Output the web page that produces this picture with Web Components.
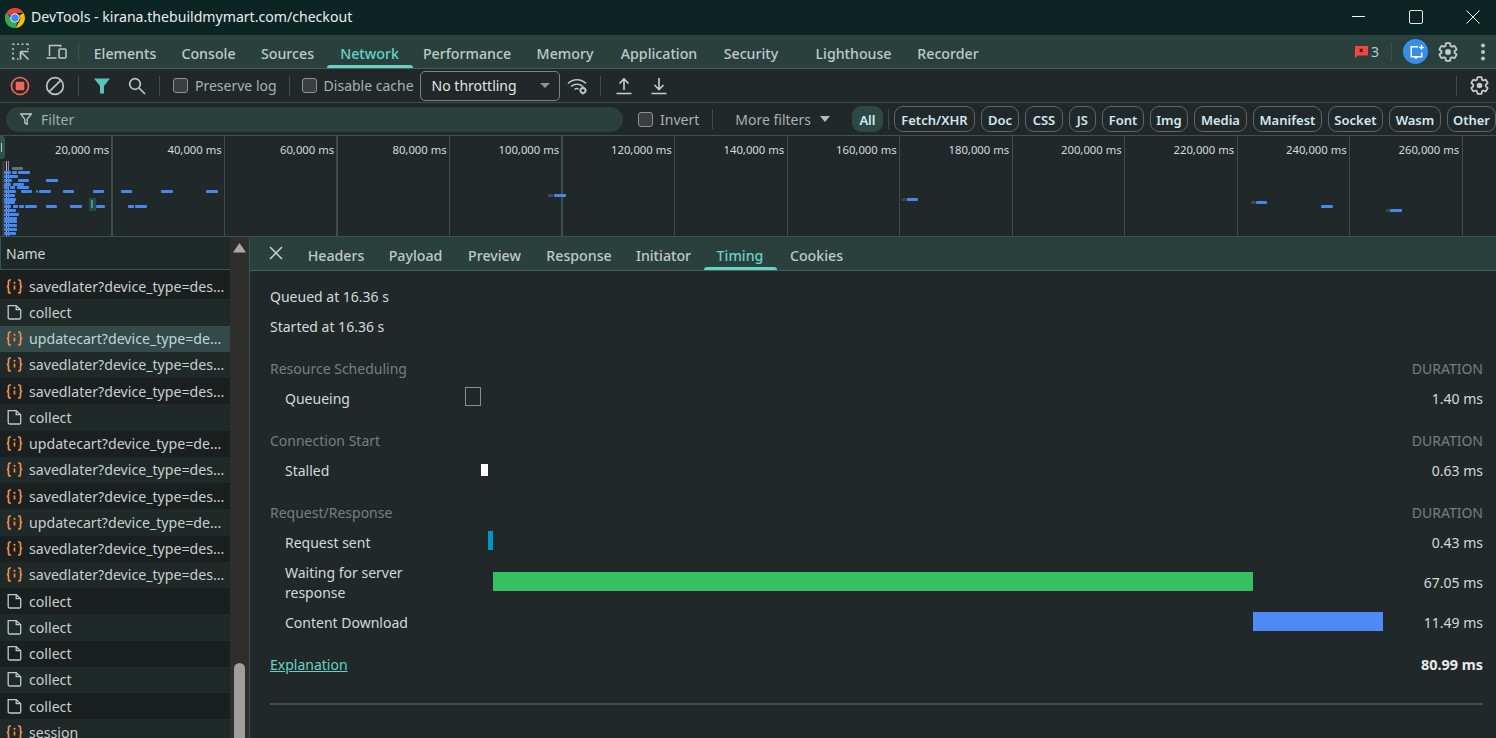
<!DOCTYPE html>
<html>
<head>
<meta charset="utf-8">
<title>DevTools</title>
<style>
  html, body { margin: 0; padding: 0; background: #212829; overflow: hidden; }
  body { font-family: "Noto Sans", "Open Sans", sans-serif; font-size: 14px; color: #c4cfcd; }
</style>
</head>
<body>
<dt-app>
  <dt-titlebar>DevTools - kirana.thebuildmymart.com/checkout</dt-titlebar>
  <dt-mainbar></dt-mainbar>
  <dt-toolbar></dt-toolbar>
  <dt-filterbar></dt-filterbar>
  <dt-overview></dt-overview>
  <dt-split>
    <dt-list slot="list"></dt-list>
    <dt-timing slot="detail"></dt-timing>
  </dt-split>
</dt-app>

<script>
// icons
const GEAR = 'M19.14 12.94c.04-.3.06-.61.06-.94 0-.32-.02-.64-.07-.94l2.03-1.58c.18-.14.23-.41.12-.61l-1.92-3.32c-.12-.22-.37-.29-.59-.22l-2.39.96c-.5-.38-1.03-.7-1.62-.94l-.36-2.54c-.04-.24-.24-.41-.48-.41h-3.84c-.24 0-.43.17-.47.41l-.36 2.54c-.59.24-1.13.57-1.62.94l-2.39-.96c-.22-.08-.47 0-.59.22L2.74 8.87c-.12.21-.08.47.12.61l2.03 1.58c-.05.3-.09.63-.09.94s.02.64.07.94l-2.03 1.58c-.18.14-.23.41-.12.61l1.92 3.32c.12.22.37.29.59.22l2.39-.96c.5.38 1.03.7 1.62.94l.36 2.54c.05.24.24.41.48.41h3.84c.24 0 .44-.17.47-.41l.36-2.54c.59-.24 1.13-.56 1.62-.94l2.39.96c.22.08.47 0 .59-.22l1.92-3.32c.12-.22.07-.47-.12-.61l-2.01-1.58z';
const gearIcon = (size) => `<svg width="${size}" height="${size}" viewBox="0 0 24 24"><path d="${GEAR}" fill="none" stroke="#c3cbc9" stroke-width="2"/><circle cx="12" cy="12" r="3.2" fill="#c3cbc9"/></svg>`;

class DtApp extends HTMLElement {
  constructor() {
    super();
    this.attachShadow({mode: 'open'}).innerHTML = `
      <style>
        :host { display: flex; flex-direction: column; width: 1496px; height: 738px; overflow: hidden; }
      </style>
      <slot></slot>`;
  }
}

class DtTitlebar extends HTMLElement {
  constructor() {
    super();
    this.attachShadow({mode: 'open'}).innerHTML = `
      <style>
        :host { display: flex; align-items: center; flex: 0 0 35px; background: #0c2523; color: #e8eeee; font-size: 14.1px; padding: 0 16px 0 5px; }
        .logo { width: 20px; height: 20px; margin-right: 6px; }
        .title { flex: 1; position: relative; top: -1px; }
        .ctls { display: flex; gap: 43px; }
        .ctls svg { display: block; margin-bottom: 1px; }
      </style>
      <svg class="logo" viewBox="4 4 40 40">
        <path d="M24 4a20 20 0 0 1 17.300 10H24a10 10 0 0 0-9.600 7.200L7.700 12A20 20 0 0 1 24 4z" fill="#ea4335"/>
        <path d="M41.300 14A20 20 0 0 1 25 44l8.400-14.500A10 10 0 0 0 32.600 19z" fill="#fbbc04"/>
        <path d="M25 44A20 20 0 0 1 7.700 12L16 26.500A10 10 0 0 0 28 33.200z" fill="#34a853"/>
        <circle cx="24" cy="24" r="9.500" fill="#fff"/>
        <circle cx="24" cy="24" r="7.500" fill="#4285f4"/>
      </svg>
      <span class="title"><slot></slot></span>
      <div class="ctls">
        <svg width="14" height="14" viewBox="0 0 14 14"><path d="M0 6.500h13" stroke="#fff" stroke-width="1"/></svg>
        <svg width="14" height="14" viewBox="0 0 14 14"><rect x=".5" y=".5" width="13" height="13" rx="1.500" fill="none" stroke="#e6e6e6"/></svg>
        <svg width="14" height="14" viewBox="0 0 14 14"><path d="M.5.5l13 13M13.500.5l-13 13" stroke="#fff" stroke-width="1"/></svg>
      </div>`;
  }
}

// one tab of the main or detail tab strips
class DtTab extends HTMLElement {
  constructor() {
    super();
    this.attachShadow({mode: 'open'}).innerHTML = `
      <style>
        :host { display: flex; align-items: center; justify-content: center; height: 100%; padding-top: 4px; box-sizing: border-box; position: relative; font-size: 14.2px; font-weight: 500; color: #bfcac8; white-space: nowrap; flex: none; }
        :host([active]) { color: #67d3c5; }
        :host([active])::after { content: ""; position: absolute; left: 0; right: 0; bottom: 0; height: 3px; border-radius: 3px 3px 0 0; background: #67d3c5; }
      </style>
      <slot></slot>`;
  }
}

class DtSep extends HTMLElement {
  constructor() {
    super();
    this.attachShadow({mode: 'open'}).innerHTML = `
      <style>
        :host { display: block; width: 1px; height: 20px; background: #3c4f4c; flex: none; }
      </style>`;
  }
}

class DtMainbar extends HTMLElement {
  constructor() {
    super();
    this.attachShadow({mode: 'open'}).innerHTML = `
      <style>
        :host { display: flex; align-items: center; flex: none; background: #2a403d; border-bottom: 1px solid #43605b; height: 33px; }
        .tools { display: flex; align-items: center; width: 78px; flex: none; padding-left: 11px; box-sizing: border-box; gap: 15px; }
        .tabs { display: flex; align-items: center; height: 100%; margin-left: 2.5px; }
        .right { margin-left: auto; display: flex; align-items: center; }
        .count { font-size: 14px; margin-left: 3px; color: #bfcac8; }
        .ai { width: 25px; height: 25px; border-radius: 50%; background: #3a8de6; display: flex; align-items: center; justify-content: center; margin: 0 9px 0 11px; }
        .gear { display: flex; margin-right: 21px; }
        .more { display: flex; margin-right: 10px; }
      </style>
      <div class="tools">
        <svg width="20" height="20" viewBox="0 0 20 20" fill="none" stroke="#bcc7c5" stroke-width="1.500"><path d="M2 3v-.8h1.500M6 2.200h2M10.500 2.200h2M15 2.200h2v1M17 6v1.500M2 6v2M2 10.500v2M2 15v2h1.500M6 17h1.500"/><path d="M9.500 9.500h8M9.500 9.500v8M9.500 9.500l8 8" stroke-width="1.700"/></svg>
        <svg width="21" height="20" viewBox="0 0 21 20" fill="none" stroke="#bcc7c5" stroke-width="1.500"><path d="M3.500 14V3.500h11V5"/><path d="M.5 16h10"/><rect x="13" y="7" width="7" height="9" rx="1"/></svg>
      </div>
      <dt-sep></dt-sep>
      <div class="tabs">
        <dt-tab style="width:87px">Elements</dt-tab>
        <dt-tab style="width:80px">Console</dt-tab>
        <dt-tab style="width:78px">Sources</dt-tab>
        <dt-tab style="width:86px" active>Network</dt-tab>
        <dt-tab style="width:109px">Performance</dt-tab>
        <dt-tab style="width:87px">Memory</dt-tab>
        <dt-tab style="width:101px">Application</dt-tab>
        <dt-tab style="width:83px">Security</dt-tab>
        <dt-tab style="width:101px;margin-left:10.500px">Lighthouse</dt-tab>
        <dt-tab style="width:88px">Recorder</dt-tab>
      </div>
      <div class="right">
        <svg width="13" height="13" viewBox="0 0 13 13"><path d="M0 1h13v9.500H3L0 13z" fill="#f2463f"/><path d="M4.700 3.800l3 3M7.700 3.800l-3 3" stroke="#30110f" stroke-width="1.200"/></svg>
        <span class="count">3</span>
        <dt-sep style="margin-left:12px"></dt-sep>
        <span class="ai"><svg width="18" height="18" viewBox="0 0 18 18"><path d="M3.500 3H11v1.500H5v8.500h9V9.500h1.500V14a.5.5 0 0 1-.5.500h-4.500L9 16.500l-1.500-2H4a.5.5 0 0 1-.5-.5z" fill="#fff"/><path d="M14.500 1.500l.9 2.100 2.100.9-2.100.9-.9 2.100-.9-2.100-2.100-.9 2.100-.9z" fill="#fff"/></svg></span>
        <span class="gear">${gearIcon(22)}</span>
        <span class="more"><svg width="6" height="18" viewBox="0 0 6 18" fill="#bcc7c5"><circle cx="3" cy="2.500" r="2"/><circle cx="3" cy="9" r="2"/><circle cx="3" cy="15.500" r="2"/></svg></span>
      </div>`;
  }
}

class DtCheck extends HTMLElement {
  constructor() {
    super();
    this.attachShadow({mode: 'open'}).innerHTML = `
      <style>
        :host { display: inline-flex; align-items: center; gap: 7px; color: #a9b2b1; font-size: 14px; white-space: nowrap; flex: none; }
        .box { width: 13px; height: 13px; border: 1px solid #8b9391; border-radius: 3px; background: #3c3f3f; }
      </style>
      <span class="box"></span><slot></slot>`;
  }
}

class DtToolbar extends HTMLElement {
  constructor() {
    super();
    this.attachShadow({mode: 'open'}).innerHTML = `
      <style>
        :host { display: flex; align-items: center; flex: none; height: 33px; background: #212829; border-bottom: 1px solid #3c4f4c; }
        .rec { margin-left: 10px; display: flex; }
        .clear { margin-left: 15px; display: flex; }
        .funnel { margin-left: 15px; display: flex; }
        .search { margin-left: 18px; display: flex; }
        .select { width: 140px; height: 30px; box-sizing: border-box; margin-left: 6px; padding: 0 11px; border: 1px solid #7a8583; border-radius: 5px; display: flex; align-items: center; justify-content: space-between; color: #e0e6e5; font-size: 14px; }
        .select i { width: 0; height: 0; border: 5px solid transparent; border-top: 5px solid #8e9795; border-bottom: 0; margin-right: -2px; }
        .wifi { margin-left: 7px; display: flex; }
        .up { margin-left: 15px; display: flex; }
        .down { margin-left: 19px; display: flex; }
        .end { margin-left: auto; display: flex; align-items: center; }
      </style>
      <span class="rec"><svg width="20" height="20" viewBox="0 0 20 20"><circle cx="10" cy="10" r="8.500" fill="none" stroke="#f2665c" stroke-width="1.700"/><rect x="5.700" y="5.700" width="8.600" height="8.600" rx="1" fill="#f2665c"/></svg></span>
      <span class="clear"><svg width="20" height="20" viewBox="0 0 20 20" fill="none" stroke="#bcc7c5" stroke-width="1.700"><circle cx="10" cy="10" r="8.300"/><path d="M4.300 15.700L15.700 4.300"/></svg></span>
      <dt-sep style="margin-left:13px"></dt-sep>
      <span class="funnel"><svg width="16" height="16" viewBox="0 0 16 16"><path d="M0 .5h16L10 8v7.500H6V8z" fill="#58c4b6"/></svg></span>
      <span class="search"><svg width="18" height="18" viewBox="0 0 18 18" fill="none" stroke="#bcc7c5" stroke-width="1.700"><circle cx="7" cy="7" r="5.300"/><path d="M11 11l6 6"/></svg></span>
      <dt-sep style="margin-left:13px"></dt-sep>
      <dt-check style="margin-left:13px">Preserve log</dt-check>
      <dt-sep style="margin-left:12px"></dt-sep>
      <dt-check style="margin-left:12px">Disable cache</dt-check>
      <div class="select"><span>No throttling</span><i></i></div>
      <span class="wifi"><svg width="21" height="18" viewBox="0 0 21 18" fill="none" stroke="#bcc7c5" stroke-width="1.500"><path d="M1 6.500c5-5 13-5 18 0M4 9.500c3.500-3 8.500-3 12 0M7.500 12.300c1.500-1 3-1 4 0"/><circle cx="16" cy="13.500" r="2.500" stroke-width="1.800"/><path d="M16 9.500v1.500M16 16v1.500M12.500 13.500H14M18 13.500h1.500" stroke-width="1.300"/></svg></span>
      <dt-sep style="margin-left:12px"></dt-sep>
      <span class="up"><svg width="16" height="18" viewBox="0 0 16 18" fill="none" stroke="#c6d0ce" stroke-width="1.600"><path d="M8 13V2M3.500 6.500L8 2l4.500 4.500M.5 16.500h15"/></svg></span>
      <span class="down"><svg width="16" height="18" viewBox="0 0 16 18" fill="none" stroke="#c6d0ce" stroke-width="1.600"><path d="M8 1v11M3.500 8L8 12.500 12.500 8M.5 16.500h15"/></svg></span>
      <div class="end">
        <dt-sep style="margin-right:12px"></dt-sep>
        <span style="display:flex;margin-right:6px">${gearIcon(21)}</span>
      </div>`;
  }
}

class DtChip extends HTMLElement {
  constructor() {
    super();
    this.attachShadow({mode: 'open'}).innerHTML = `
      <style>
        :host { display: flex; align-items: center; justify-content: center; box-sizing: border-box; height: 26px; padding-top: 1px; border: 1px solid #5e6665; border-radius: 9px; font-size: 13px; font-weight: 600; color: #d5e6ee; white-space: nowrap; flex: none; }
        :host([selected]) { background: #2d4845; border-color: #2d4845; color: #cfeef2; }
      </style>
      <slot></slot>`;
  }
}

class DtFilterbar extends HTMLElement {
  constructor() {
    super();
    this.attachShadow({mode: 'open'}).innerHTML = `
      <style>
        :host { display: flex; align-items: center; flex: none; height: 32px; background: #212829; overflow: hidden; }
        .input { width: 617px; height: 25px; margin-left: 6px; border-radius: 13px; background: #2a403d; display: flex; align-items: center; flex: none; color: #a3adab; font-size: 14px; }
        .input svg { margin: 0 9px 0 14px; }
        .more { display: flex; align-items: center; color: #a9b2b1; font-size: 14px; margin-left: 22px; white-space: nowrap; flex: none; }
        .more i { width: 0; height: 0; border: 5px solid transparent; border-top: 6px solid #b4bdbb; border-bottom: 0; margin-left: 9px; }
        .chips { display: flex; gap: 6px; margin-left: 5px; }
      </style>
      <div class="input"><svg width="12" height="12" viewBox="0 0 12 12" fill="none" stroke="#bcc7c5" stroke-width="1.300"><path d="M.7 1h10.600L7.200 6.200v5L4.800 10V6.200z"/></svg>Filter</div>
      <dt-check style="margin-left:15px">Invert</dt-check>
      <dt-sep style="margin-left:13px"></dt-sep>
      <div class="more">More filters<i></i></div>
      <dt-chip selected style="width:31px;margin-left:22px">All</dt-chip>
      <dt-sep style="margin-left:5px"></dt-sep>
      <div class="chips">
        <dt-chip style="width:81px">Fetch/XHR</dt-chip>
        <dt-chip style="width:38px">Doc</dt-chip>
        <dt-chip style="width:38px">CSS</dt-chip>
        <dt-chip style="width:27px">JS</dt-chip>
        <dt-chip style="width:42px">Font</dt-chip>
        <dt-chip style="width:38px">Img</dt-chip>
        <dt-chip style="width:53px">Media</dt-chip>
        <dt-chip style="width:69px">Manifest</dt-chip>
        <dt-chip style="width:55px">Socket</dt-chip>
        <dt-chip style="width:52px">Wasm</dt-chip>
        <dt-chip style="width:49px">Other</dt-chip>
      </div>`;
  }
}

// network overview: time grid and waterfall bars, [x, y, width, colour]
const OV_BARS = [
  [12, 168, 11, '#6a6f6f'],
  [4, 172, 7], [12, 172, 5], [18, 172, 12],
  [4, 176, 14],
  [4, 180, 8], [18, 180, 11], [46, 180, 12],
  [4, 184, 7], [13, 184, 11],
  [4, 187, 4], [10, 187, 5], [17, 187, 12],
  [4, 191, 12], [21, 191, 11], [39, 191, 12], [63, 191, 11], [93, 191, 11], [121, 191, 11], [161, 191, 12], [206, 191, 12],
  [36, 191, 2, '#2f9e58'],
  [4, 195, 11], [4, 199, 12], [4, 202, 11],
  [4, 206, 7], [13, 206, 5], [19, 206, 5], [25, 206, 12], [46, 206, 11], [70, 206, 12], [96, 206, 9], [128, 206, 6], [135, 206, 12],
  [4, 210, 12], [4, 214, 15], [4, 218, 13], [4, 221, 13], [4, 225, 13], [4, 229, 13], [4, 233, 12],
  [548, 195, 5, '#4a4468'], [554, 195, 12],
  [902, 199, 5, '#36465a'], [907, 199, 11],
  [1251, 202, 5, '#344a52'], [1256, 202, 11],
  [1321, 206, 12],
  [1386, 210, 4, '#344a52'], [1390, 210, 12]
];

class DtOverview extends HTMLElement {
  constructor() {
    super();
    const labels = [];
    for (let i = 1; i <= 13; i++) {
      labels.push(`<div class="cell${i == 1 || i == 3 || i == 5 ? ' thick' : ''}">${i * 20},000 ms</div>`);
    }
    const bars = OV_BARS.map(b => `<i style="left:${b[0]}px;top:${b[1] - 137}px;width:${b[2]}px;background:${b[3] || '#4788ee'}"></i>`).join('');
    this.attachShadow({mode: 'open'}).innerHTML = `
      <style>
        :host { display: block; flex: none; height: 102px; position: relative; background: #212829; border-top: 1px solid #3c524e; border-bottom: 1px solid #3c524e; box-sizing: border-box; overflow: hidden; }
        .grid { display: flex; height: 100%; margin-left: .2px; }
        .cell { flex: 0 0 112.5px; box-sizing: border-box; border-right: 1px solid #3c4f4c; text-align: right; font-size: 11.3px; color: #d3dcda; padding: 6px 2.5px 0 0; white-space: nowrap; }
        .thick { border-right-width: 2px; padding-right: 1.5px; }
        .bars i { position: absolute; height: 3px; border-radius: 1px; }
        .handle { position: absolute; left: 0; top: 0; width: 5px; height: 23px; background: #33504c; border-radius: 0 3px 3px 0; }
        .handle::after { content: ""; position: absolute; left: 1px; top: 7px; width: 1px; height: 9px; background: #9fd0c8; }
        .mark { position: absolute; top: 25px; bottom: 0; width: 1px; }
        .hit { position: absolute; left: 89px; top: 62px; width: 7px; height: 13px; background: #264a48; }
        .hit::after { content: ""; position: absolute; left: 2px; top: 2px; width: 2px; height: 8px; background: #3c95a5; }
      </style>
      <div class="grid">${labels.join('')}</div>
      <div class="mark" style="left:2px;width:3px;background:#353b3b"></div>
      <div class="mark" style="left:6px;background:#e8a89a"></div>
      <div class="mark" style="left:8px;background:#6b8fd6"></div>
      <div class="handle"></div>
      <div class="hit"></div>
      <div class="bars">${bars}</div>`;
  }
}

class DtSplit extends HTMLElement {
  constructor() {
    super();
    this.attachShadow({mode: 'open'}).innerHTML = `
      <style>
        :host { display: flex; flex: 1; min-height: 0; }
        .l { flex: 0 0 249px; display: flex; overflow: hidden; border-right: 1px solid #3c524e; }
        .r { flex: 1; min-width: 0; display: flex; }
      </style>
      <div class="l"><slot name="list"></slot></div>
      <div class="r"><slot name="detail"></slot></div>`;
  }
}

class DtRow extends HTMLElement {
  constructor() {
    super();
    const json = this.getAttribute('kind') == 'json';
    const icon = json
      ? `<svg width="17" height="15" viewBox="0 0 17 15" fill="none" stroke="#f28a4d" stroke-width="1.700"><path d="M5 1H4C2.800 1 2.500 1.800 2.500 3v2.500C2.500 6.500 2 7.500.8 7.500c1.200 0 1.700 1 1.700 2V12c0 1.200.3 2 1.500 2h1M12 1h1c1.200 0 1.500.8 1.500 2v2.500c0 1 .5 2 1.700 2-1.200 0-1.700 1-1.700 2V12c0 1.200-.3 2-1.500 2h-1"/><path d="M8.500 6.500v4"/><circle cx="8.500" cy="3.800" r="1.100" fill="#f28a4d" stroke="none"/></svg>`
      : `<svg width="17" height="15" viewBox="0 0 17 15" fill="none" stroke="#c3c8c7" stroke-width="1.300"><path d="M2.200.7h8l4.500 4v8a1.300 1.300 0 0 1-1.300 1.300H3.500a1.300 1.300 0 0 1-1.300-1.300z"/><path d="M10.200.7v4h4.500"/></svg>`;
    this.attachShadow({mode: 'open'}).innerHTML = `
      <style>
        :host { display: flex; align-items: center; flex: none; height: 26.25px; padding-left: 6px; gap: 6px; font-size: 14.15px; color: #c8cfce; background: #1a2020; white-space: nowrap; overflow: hidden; }
        :host([even]) { background: #1f2928; }
        :host([selected]) { background: #334a48; color: #bcd8d4; }
        svg { flex: none; }
      </style>
      ${icon}<span><slot></slot></span>`;
  }
}

class DtList extends HTMLElement {
  constructor() {
    super();
    const saved = 'savedlater?device_type=des...';
    const cart = 'updatecart?device_type=de...';
    const rows = [
      ['json', saved], ['doc', 'collect'], ['json', cart, 1],
      ['json', saved], ['json', saved], ['doc', 'collect'],
      ['json', cart], ['json', saved], ['json', saved],
      ['json', cart], ['json', saved], ['json', saved],
      ['doc', 'collect'], ['doc', 'collect'], ['doc', 'collect'], ['doc', 'collect'], ['doc', 'collect'], ['json', 'session']
    ];
    const html = rows.map((r, i) => `<dt-row kind="${r[0]}"${i % 2 ? ' even' : ''}${r[2] ? ' selected' : ''}>${r[1]}</dt-row>`).join('');
    this.attachShadow({mode: 'open'}).innerHTML = `
      <style>
        :host { display: flex; width: 249px; height: 100%; }
        .col { width: 230px; flex: none; display: flex; flex-direction: column; background: #1a2020; overflow: hidden; }
        .head { flex: none; height: 33px; box-sizing: border-box; display: flex; align-items: center; padding-left: 5px; border: 1px solid #3c524e; border-top: 0; border-right: 0; background: #1f2928; color: #cdd5d3; font-size: 14px; margin-bottom: 3px; }
        .bar { width: 19px; flex: none; background: #2e2e2e; position: relative; }
        .bar svg { position: absolute; left: 3px; top: 5px; }
        .thumb { position: absolute; left: 4px; width: 11px; top: 426px; height: 100px; border-radius: 6px 6px 0 0; background: #9e9e9e; }
      </style>
      <div class="col"><div class="head">Name</div>${html}</div>
      <div class="bar">
        <svg width="13" height="11" viewBox="0 0 13 11"><path d="M6.500 1L13 10.500H0z" fill="#a8a8a8"/></svg>
        <div class="thumb"></div>
      </div>`;
  }
}

// a row of the timing table: label, bar track, duration
class DtTimingRow extends HTMLElement {
  constructor() {
    super();
    const start = this.getAttribute('start');
    const w = this.getAttribute('w');
    const color = this.getAttribute('color');
    const h = this.getAttribute('h') || 19;
    const shift = this.getAttribute('shift') || 0;
    const outline = this.hasAttribute('outline');
    this.attachShadow({mode: 'open'}).innerHTML = `
      <style>
        :host { display: grid; grid-template-columns: 180px 918px 1fr; align-items: center; box-sizing: border-box; min-height: 30px; padding: 2px 0 0 15px; color: #d4dad9; font-size: 14px; line-height: 20px; }
        :host([tall]) { min-height: 50px; }
        .track { height: 19px; position: relative; top: -3px; display: flex; align-items: center; }
        .seg { margin-left: ${start}px; width: ${w}px; height: ${h}px; box-sizing: border-box; position: relative; top: ${shift}px; background: ${outline ? 'transparent' : color}; ${outline ? 'border: 1px solid #8a8f8e;' : ''} }
        .val { text-align: right; }
      </style>
      <div><slot></slot></div>
      <div class="track"><div class="seg"></div></div>
      <div class="val">${this.getAttribute('value')}</div>`;
  }
}

class DtSection extends HTMLElement {
  constructor() {
    super();
    this.attachShadow({mode: 'open'}).innerHTML = `
      <style>
        :host { display: flex; justify-content: space-between; align-items: center; height: 30px; color: #787f7e; font-size: 14px; }
      </style>
      <slot></slot><span>DURATION</span>`;
  }
}

class DtTiming extends HTMLElement {
  constructor() {
    super();
    this.attachShadow({mode: 'open'}).innerHTML = `
      <style>
        :host { display: flex; flex-direction: column; flex: 1; min-width: 0; background: #212829; }
        .tabs { flex: none; height: 34px; box-sizing: border-box; display: flex; align-items: center; background: #2a403d; border-bottom: 1px solid #43605b; }
        .close { display: flex; margin: -1px 12.500px 0 19px; }
        .body { padding: 10px 13px 0 20px; color: #d4dad9; font-size: 14px; }
        .q { height: 30px; display: flex; align-items: center; }
        dt-section { margin-top: 12px; }
        .sum { display: flex; justify-content: space-between; align-items: center; height: 30px; margin-top: 12px; }
        .sum a { color: #67d3c5; text-decoration: underline; }
        .sum b { font-weight: 700; color: #e6ebea; font-size: 14.400px; }
        .rule { height: 2px; background: #3c524e; margin-top: 24px; }
      </style>
      <div class="tabs">
        <span class="close"><svg width="14" height="14" viewBox="0 0 14 14"><path d="M1 1l12 12M13 1L1 13" stroke="#c6d0ce" stroke-width="1.500"/></svg></span>
        <dt-tab style="width:81px">Headers</dt-tab>
        <dt-tab style="width:78px">Payload</dt-tab>
        <dt-tab style="width:80px">Preview</dt-tab>
        <dt-tab style="width:89px">Response</dt-tab>
        <dt-tab style="width:80px">Initiator</dt-tab>
        <dt-tab style="width:73px" active>Timing</dt-tab>
        <dt-tab style="width:80px">Cookies</dt-tab>
      </div>
      <div class="body">
        <div class="q">Queued at 16.36 s</div>
        <div class="q">Started at 16.36 s</div>
        <dt-section>Resource Scheduling</dt-section>
        <dt-timing-row start="0" w="16" outline value="1.40 ms">Queueing</dt-timing-row>
        <dt-section>Connection Start</dt-section>
        <dt-timing-row start="16" w="7" h="12" shift="2" color="#ffffff" value="0.63 ms">Stalled</dt-timing-row>
        <dt-section>Request/Response</dt-section>
        <dt-timing-row start="23" w="5" color="#0097c4" value="0.43 ms">Request sent</dt-timing-row>
        <dt-timing-row tall start="28" w="760" shift="1" color="#38c060" value="67.05 ms">Waiting for server<br>response</dt-timing-row>
        <dt-timing-row start="788" w="130" shift="1" color="#4d8af5" value="11.49 ms">Content Download</dt-timing-row>
        <div class="sum"><a>Explanation</a><b>80.99 ms</b></div>
        <div class="rule"></div>
      </div>`;
  }
}

customElements.define('dt-app', DtApp);
customElements.define('dt-titlebar', DtTitlebar);
customElements.define('dt-tab', DtTab);
customElements.define('dt-sep', DtSep);
customElements.define('dt-mainbar', DtMainbar);
customElements.define('dt-check', DtCheck);
customElements.define('dt-toolbar', DtToolbar);
customElements.define('dt-chip', DtChip);
customElements.define('dt-filterbar', DtFilterbar);
customElements.define('dt-overview', DtOverview);
customElements.define('dt-split', DtSplit);
customElements.define('dt-row', DtRow);
customElements.define('dt-list', DtList);
customElements.define('dt-timing-row', DtTimingRow);
customElements.define('dt-section', DtSection);
customElements.define('dt-timing', DtTiming);
</script>
</body>
</html>
